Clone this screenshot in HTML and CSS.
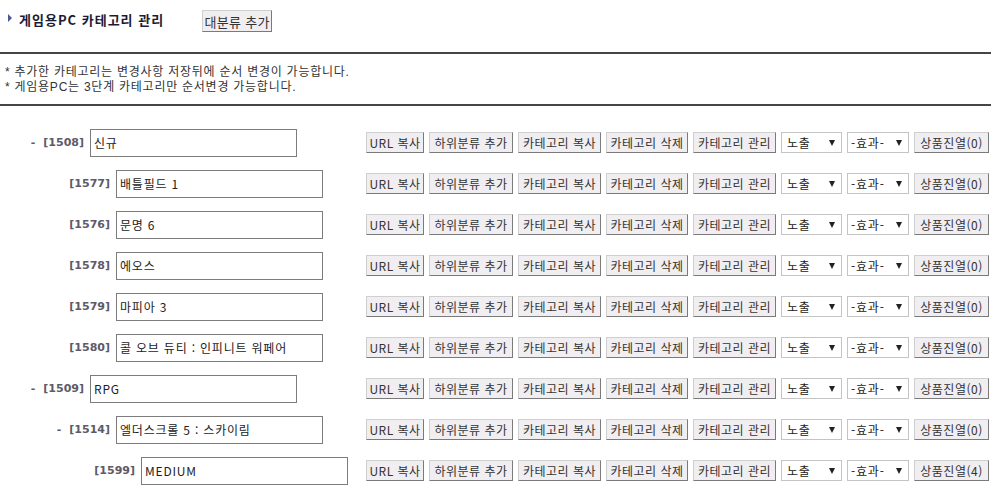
FILE: index.html
```html
<!DOCTYPE html>
<html lang="ko">
<head>
<meta charset="utf-8">
<title>게임용PC 카테고리 관리</title>
<link rel="stylesheet" href="styles.css">
</head>
<body>
<div class="page">
  <div class="header">
    <span class="bullet"></span>
    <h1 class="title">게임용PC 카테고리 관리</h1>
    <button class="btn btn-top">대분류 추가</button>
  </div>
  <div class="notes">
    <p>* 추가한 카테고리는 변경사항 저장뒤에 순서 변경이 가능합니다.</p>
    <p>* 게임용PC는 3단계 카테고리만 순서변경 가능합니다.</p>
  </div>
  <ul class="tree">
    <li class="row lv1">
      <div class="name-cell"><span class="code"><span class="dash">-</span>[1508]</span><input class="name" value="신규"></div>
      <div class="actions"><button class="btn b-url">URL 복사</button><button class="btn b-sub">하위분류 추가</button><button class="btn b-cat">카테고리 복사</button><button class="btn b-del">카테고리 삭제</button><button class="btn b-cat">카테고리 관리</button><span class="select s-show"><select><option>노출</option></select></span><span class="select s-fx"><select><option>-효과-</option></select></span><button class="btn b-disp">상품진열(0)</button></div>
    </li>
    <li class="row lv2">
      <div class="name-cell"><span class="code">[1577]</span><input class="name" value="배틀필드 1"></div>
      <div class="actions"><button class="btn b-url">URL 복사</button><button class="btn b-sub">하위분류 추가</button><button class="btn b-cat">카테고리 복사</button><button class="btn b-del">카테고리 삭제</button><button class="btn b-cat">카테고리 관리</button><span class="select s-show"><select><option>노출</option></select></span><span class="select s-fx"><select><option>-효과-</option></select></span><button class="btn b-disp">상품진열(0)</button></div>
    </li>
    <li class="row lv2">
      <div class="name-cell"><span class="code">[1576]</span><input class="name" value="문명 6"></div>
      <div class="actions"><button class="btn b-url">URL 복사</button><button class="btn b-sub">하위분류 추가</button><button class="btn b-cat">카테고리 복사</button><button class="btn b-del">카테고리 삭제</button><button class="btn b-cat">카테고리 관리</button><span class="select s-show"><select><option>노출</option></select></span><span class="select s-fx"><select><option>-효과-</option></select></span><button class="btn b-disp">상품진열(0)</button></div>
    </li>
    <li class="row lv2">
      <div class="name-cell"><span class="code">[1578]</span><input class="name" value="에오스"></div>
      <div class="actions"><button class="btn b-url">URL 복사</button><button class="btn b-sub">하위분류 추가</button><button class="btn b-cat">카테고리 복사</button><button class="btn b-del">카테고리 삭제</button><button class="btn b-cat">카테고리 관리</button><span class="select s-show"><select><option>노출</option></select></span><span class="select s-fx"><select><option>-효과-</option></select></span><button class="btn b-disp">상품진열(0)</button></div>
    </li>
    <li class="row lv2">
      <div class="name-cell"><span class="code">[1579]</span><input class="name" value="마피아 3"></div>
      <div class="actions"><button class="btn b-url">URL 복사</button><button class="btn b-sub">하위분류 추가</button><button class="btn b-cat">카테고리 복사</button><button class="btn b-del">카테고리 삭제</button><button class="btn b-cat">카테고리 관리</button><span class="select s-show"><select><option>노출</option></select></span><span class="select s-fx"><select><option>-효과-</option></select></span><button class="btn b-disp">상품진열(0)</button></div>
    </li>
    <li class="row lv2">
      <div class="name-cell"><span class="code">[1580]</span><input class="name" value="콜 오브 듀티 : 인피니트 워페어"></div>
      <div class="actions"><button class="btn b-url">URL 복사</button><button class="btn b-sub">하위분류 추가</button><button class="btn b-cat">카테고리 복사</button><button class="btn b-del">카테고리 삭제</button><button class="btn b-cat">카테고리 관리</button><span class="select s-show"><select><option>노출</option></select></span><span class="select s-fx"><select><option>-효과-</option></select></span><button class="btn b-disp">상품진열(0)</button></div>
    </li>
    <li class="row lv1">
      <div class="name-cell"><span class="code"><span class="dash">-</span>[1509]</span><input class="name" value="RPG"></div>
      <div class="actions"><button class="btn b-url">URL 복사</button><button class="btn b-sub">하위분류 추가</button><button class="btn b-cat">카테고리 복사</button><button class="btn b-del">카테고리 삭제</button><button class="btn b-cat">카테고리 관리</button><span class="select s-show"><select><option>노출</option></select></span><span class="select s-fx"><select><option>-효과-</option></select></span><button class="btn b-disp">상품진열(0)</button></div>
    </li>
    <li class="row lv2">
      <div class="name-cell"><span class="code"><span class="dash">-</span>[1514]</span><input class="name" value="엘더스크롤 5 : 스카이림"></div>
      <div class="actions"><button class="btn b-url">URL 복사</button><button class="btn b-sub">하위분류 추가</button><button class="btn b-cat">카테고리 복사</button><button class="btn b-del">카테고리 삭제</button><button class="btn b-cat">카테고리 관리</button><span class="select s-show"><select><option>노출</option></select></span><span class="select s-fx"><select><option>-효과-</option></select></span><button class="btn b-disp">상품진열(0)</button></div>
    </li>
    <li class="row lv3">
      <div class="name-cell"><span class="code">[1599]</span><input class="name" value="MEDIUM"></div>
      <div class="actions"><button class="btn b-url">URL 복사</button><button class="btn b-sub">하위분류 추가</button><button class="btn b-cat">카테고리 복사</button><button class="btn b-del">카테고리 삭제</button><button class="btn b-cat">카테고리 관리</button><span class="select s-show"><select><option>노출</option></select></span><span class="select s-fx"><select><option>-효과-</option></select></span><button class="btn b-disp">상품진열(4)</button></div>
    </li>
  </ul>
</div>
</body>
</html>
```

FILE: styles.css
```css
* { box-sizing: border-box; }

html, body {
  margin: 0;
  padding: 0;
  background: #ffffff;
}

body {
  font-family: "Noto Sans CJK KR", "DejaVu Sans", sans-serif;
  font-size: 12px;
  letter-spacing: 0.6px;
  color: #333333;
  overflow: hidden;
}

.page {
  width: 991px;
}

/* header */
.header {
  height: 52px;
  display: flex;
  align-items: flex-start;
  padding-left: 8px;
  padding-top: 10px;
}

.bullet {
  width: 0;
  height: 0;
  margin-top: 4px;
  border-top: 4px solid transparent;
  border-bottom: 4px solid transparent;
  border-left: 4px solid #4a5896;
}

.title {
  margin: 0 38px 0 7px;
  font-size: 13px;
  font-weight: bold;
  letter-spacing: 1px;
  line-height: 20px;
  color: #1d1b33;
}

.btn {
  font-family: "Noto Sans CJK KR", "DejaVu Sans", sans-serif;
  font-size: 12px;
  letter-spacing: 0.5px;
  line-height: 1;
  color: #333333;
  height: 21px;
  padding: 0;
  text-align: center;
  background: #f0eef0;
  border: 1px solid;
  border-color: #cfcfcf #7a7a7a #7a7a7a #cfcfcf;
  border-radius: 0;
  cursor: pointer;
  white-space: nowrap;
}

.btn-top {
  width: 70px;
  height: 22px;
  font-size: 13px;
  letter-spacing: 0.3px;
}

.b-url { width: 58px; }
.b-sub { width: 84px; }
.b-cat { width: 83px; }
.b-del { width: 82px; }
.b-disp { width: 75px; }

/* notes */
.notes {
  border-top: 2px solid #454545;
  border-bottom: 2px solid #454545;
  padding: 11px 5px 9px;
}

.notes p {
  margin: 0;
  height: 15px;
  line-height: 15px;
  font-family: "Liberation Sans", "Noto Sans CJK KR", sans-serif;
  letter-spacing: 0.75px;
  color: #333333;
}

/* tree */
.tree {
  list-style: none;
  margin: 0;
  padding: 16px 0 0;
}

.row {
  height: 41px;
  display: flex;
  align-items: center;
}

.name-cell {
  width: 366px;
  display: flex;
  align-items: center;
}

.lv1 .name-cell { padding-left: 24px; }
.lv2 .name-cell { padding-left: 50px; }
.lv3 .name-cell { padding-left: 75px; }

.code {
  width: 60px;
  margin-right: 6px;
  text-align: right;
  font-family: "DejaVu Sans", sans-serif;
  font-size: 11px;
  font-weight: bold;
  letter-spacing: 0;
  color: #5e5a68;
  white-space: nowrap;
}

.dash {
  margin-right: 8px;
}

.name {
  width: 207px;
  height: 28px;
  margin: 0;
  padding: 0 3px;
  border: 1px solid #7c7c7c;
  font-family: "Noto Sans CJK KR", "DejaVu Sans", sans-serif;
  font-size: 12px;
  letter-spacing: 0.8px;
  color: #222222;
  background: #ffffff;
  outline: none;
}

.actions {
  display: flex;
  align-items: center;
  gap: 5px;
}

.select {
  position: relative;
  display: block;
  height: 21px;
}

.s-show { width: 61px; }
.s-fx { width: 62px; }

.select select {
  appearance: none;
  -webkit-appearance: none;
  width: 100%;
  height: 100%;
  margin: 0;
  padding: 0 0 0 5px;
  border: 1px solid #c4c4c4;
  border-radius: 0;
  background: #ffffff;
  font-family: "Noto Sans CJK KR", "DejaVu Sans", sans-serif;
  font-size: 12px;
  letter-spacing: 0.8px;
  color: #222222;
}

.s-fx select { padding-left: 3px; }

.select::after {
  content: "";
  position: absolute;
  right: 7px;
  top: 8px;
  width: 0;
  height: 0;
  border-left: 3px solid transparent;
  border-right: 3px solid transparent;
  border-top: 6px solid #222222;
  pointer-events: none;
}
```
